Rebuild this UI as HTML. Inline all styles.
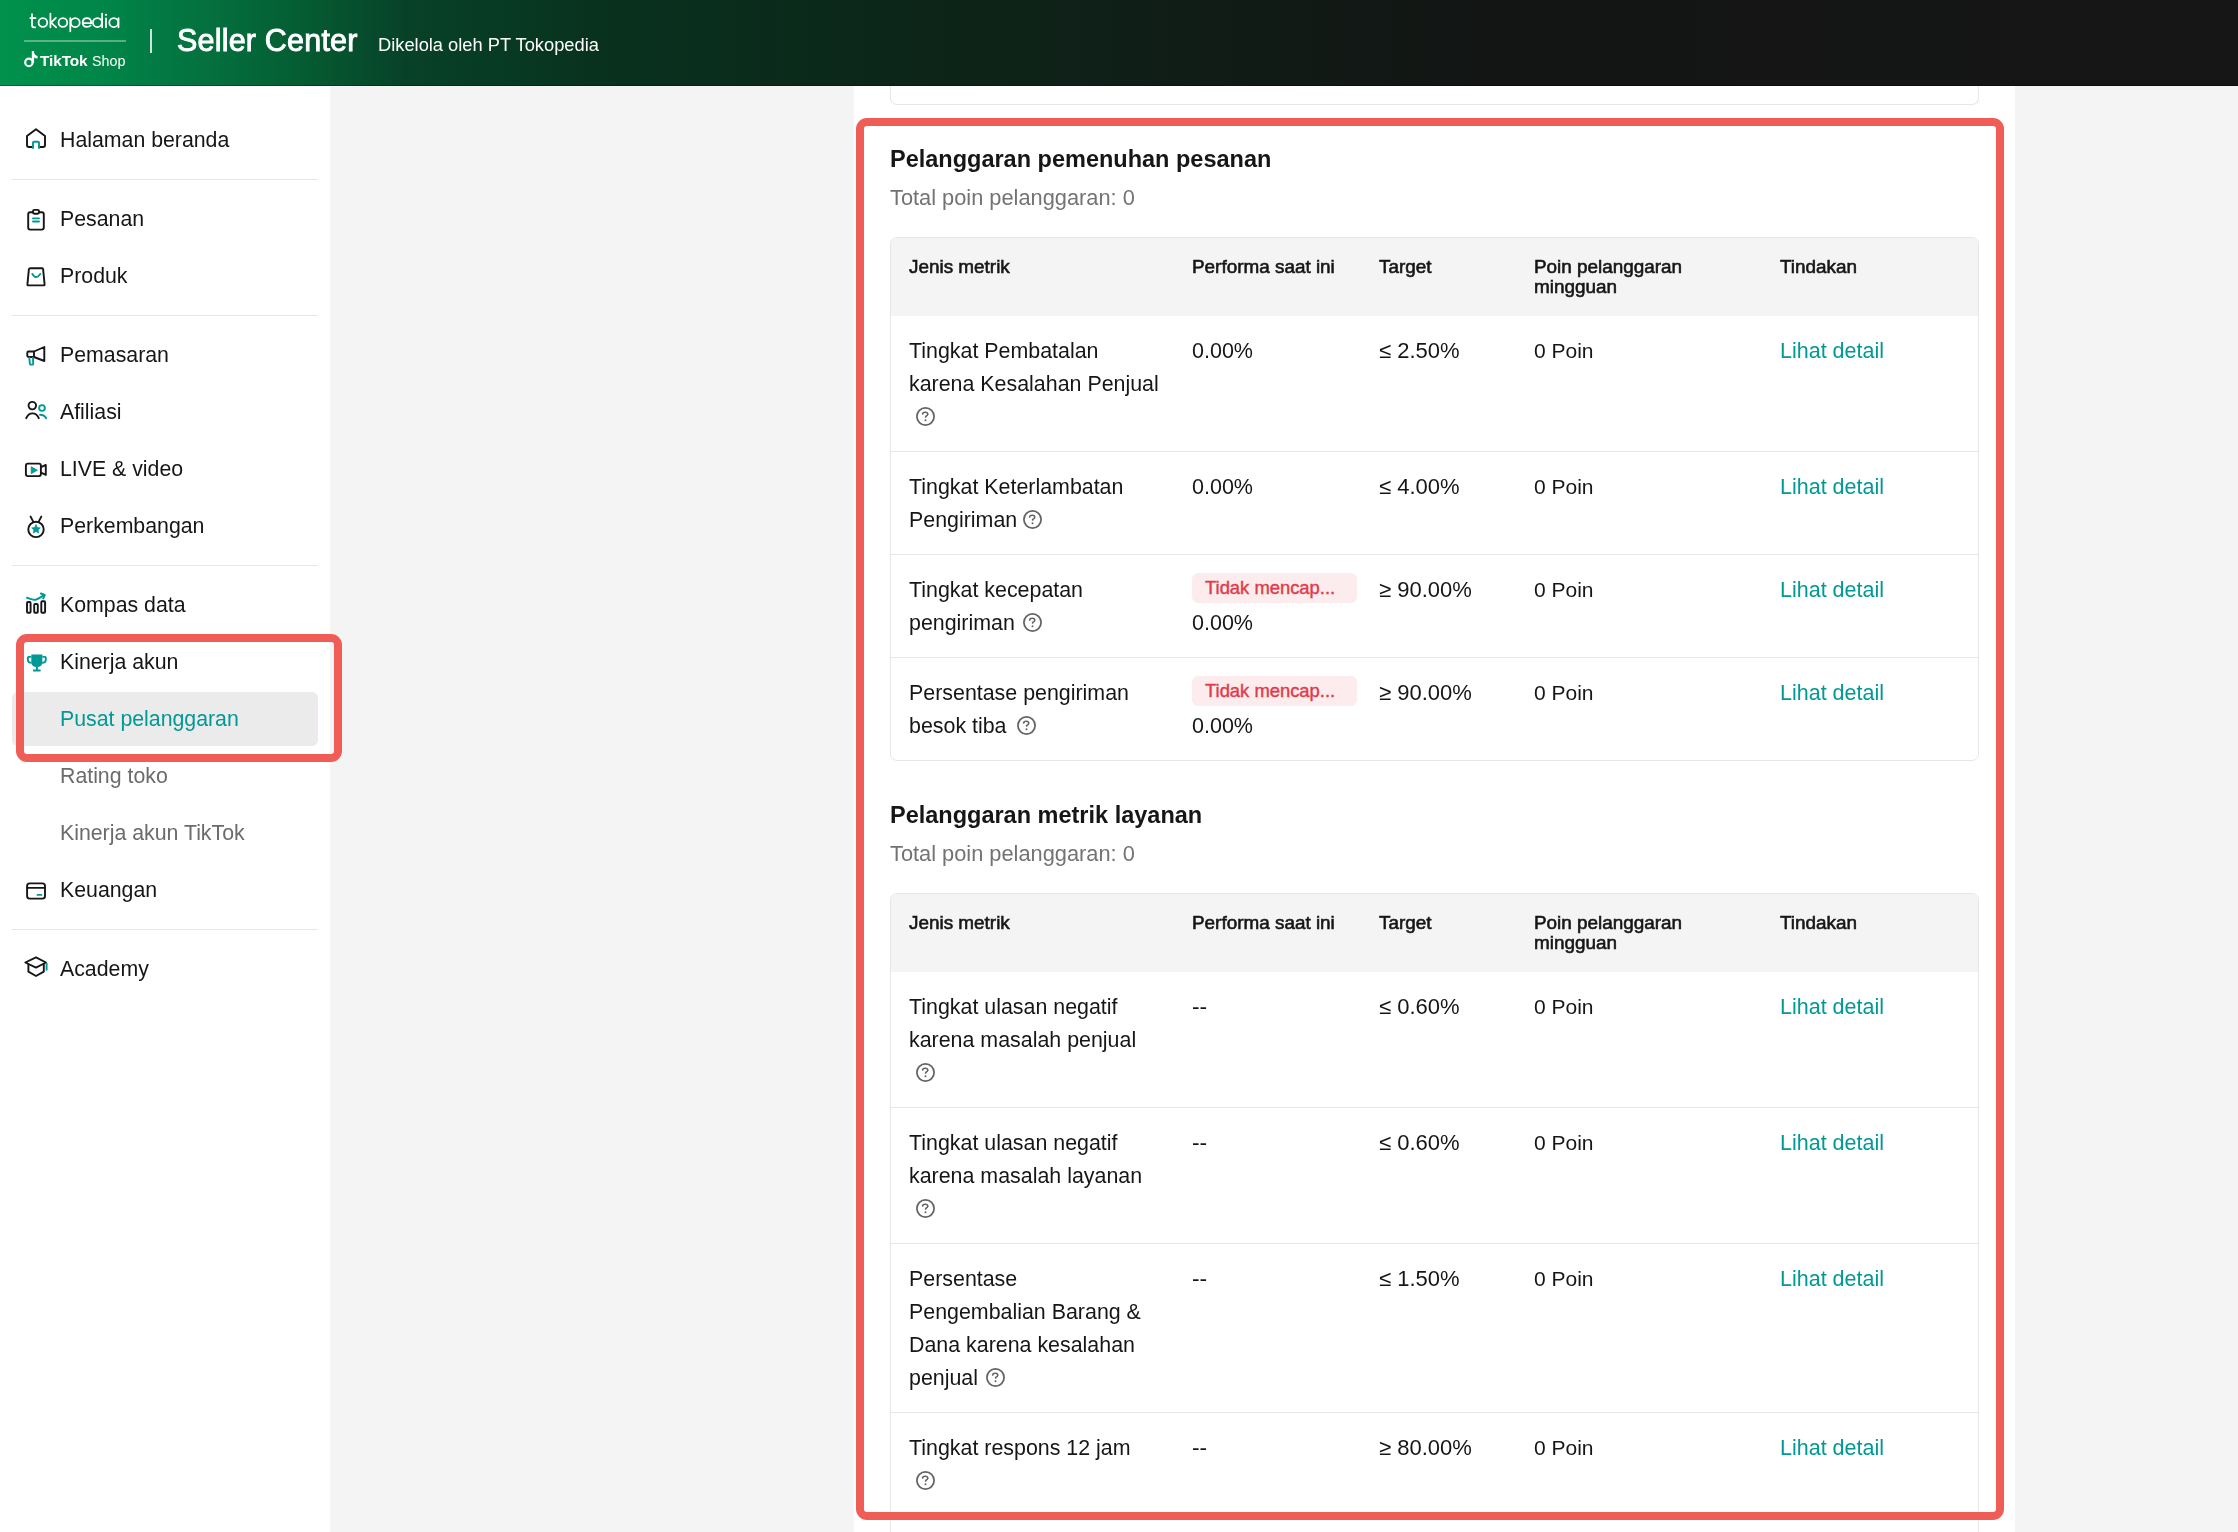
<!DOCTYPE html>
<html><head><meta charset="utf-8"><title>Seller Center</title>
<style>
*{box-sizing:border-box;margin:0;padding:0}
html,body{width:2238px;height:1532px;overflow:hidden;background:#f4f4f4;font-family:"Liberation Sans", sans-serif;}
#hdr{position:absolute;left:0;top:0;width:2238px;height:86px;background:linear-gradient(90deg,#00914d 0px,#008548 104px,#04713f 204px,#055c32 304px,#074228 404px,#08311e 604px,#0c2619 904px,#101c16 1204px,#131514 1504px,#161616 2238px);}
#hdrline{position:absolute;left:0;top:85px;width:2238px;height:1px;background:rgba(0,0,0,0.3)}
#side{position:absolute;left:0;top:86px;width:330px;height:1446px;background:#fff}
.div{position:absolute;left:12px;width:306px;height:1px;background:#e6e6e6}
#sel{position:absolute;left:12px;top:692px;width:306px;height:54px;background:#ebebeb;border-radius:6px}
#panel{position:absolute;left:854px;top:86px;width:1161px;height:1446px;background:#fff}
#topcard{position:absolute;left:890px;top:80px;width:1089px;height:25px;border:1px solid #e6e6e6;border-top:none;border-radius:0 0 7px 7px}
.tbl{position:absolute;left:890px;width:1089px;border:1px solid #e6e6e6;border-radius:7px;overflow:hidden}
.thead{position:absolute;left:0;top:0;width:100%;background:#f4f4f4}
.hl{position:absolute;left:891px;width:1087px;height:1px;background:#e6e6e6}
.t{position:absolute;white-space:nowrap;font-family:"Liberation Sans", sans-serif;will-change:transform}
.q{position:absolute}
.badge{position:absolute;left:1192px;width:165px;height:30px;border-radius:6px;background:#fdeced;color:#e13a4a;font:400 18.4px/30px "Liberation Sans", sans-serif;-webkit-text-stroke:0.4px #e13a4a;padding-left:13px;white-space:nowrap}
#sideicons{position:absolute;left:0;top:0}
.red{position:absolute;border:8px solid #f05c56;border-radius:11px}
</style></head><body>
<div id="side"></div>
<div class="div" style="top:179px"></div>
<div class="div" style="top:315px"></div>
<div class="div" style="top:565px"></div>
<div class="div" style="top:929px"></div>
<div id="sel"></div>
<div id="panel"></div>
<div id="topcard"></div>
<div id="hdr"></div><div id="hdrline"></div>
<div class="tbl" style="top:237px;height:524px"><div class="thead" style="height:78px"></div></div>
<div class="tbl" style="top:893px;height:800px"><div class="thead" style="height:78px"></div></div>
<svg id="sideicons" width="60" height="1000" viewBox="0 0 60 1000">
<g fill="none" stroke="#161616" stroke-width="1.9" stroke-linecap="round" stroke-linejoin="round">
<path d="M33 147H29Q27 147 27 145V136L36 129.3L45 136V145Q45 147 43 147H39"/>
<rect x="28.2" y="212.2" width="15.6" height="17.4" rx="2"/>
<rect x="33" y="209.9" width="6" height="3.8" rx="1.4" fill="#fff"/>
<path d="M30.6 268.3H42.2Q43 268.3 43.1 269.1L44.6 284.4Q44.7 285.4 43.7 285.4H28.3Q27.3 285.4 27.4 284.4L28.9 269.1Q29 268.3 30.6 268.3Z"/>
<path d="M34 351.5H28.5Q27.3 351.5 27.3 352.7V355.8Q27.3 357 28.5 357H34V351.5L44.3 347V361L34 357"/>
<circle cx="32.3" cy="405.6" r="3.75"/>
<path d="M26.2 418.2C27.6 415 29.8 413.4 32.5 413.4C35.2 413.4 37.4 415 38.8 418.2"/>
<rect x="25.9" y="463.6" width="15" height="12.5" rx="2"/>
<path d="M41 467.2L45.8 464.9V474.9L41 472.6"/>
<circle cx="36" cy="529.4" r="7.7"/>
<path d="M30.6 516.6L33.2 521.6M41.3 516.6L38.7 521.6"/>
<rect x="27" y="602" width="3.6" height="10.8" rx="1"/>
<rect x="34.2" y="604" width="3.6" height="8.8" rx="1"/>
<rect x="41.3" y="601.2" width="3.8" height="11.6" rx="1"/>
<rect x="27.1" y="883.4" width="17.9" height="15.2" rx="2.6"/>
<path d="M27.2 887.9H44.9"/>
<path d="M25.3 962.5L36 957.4L46 962.5L36 967.6Z"/>
<path d="M28.4 964.4V971.7L36 976L43.8 971.7V964.4"/>
</g>
<g fill="none" stroke="#009995" stroke-width="1.9" stroke-linecap="round" stroke-linejoin="round">
<path d="M33 148V142.6Q33 141.7 34 141.7H38Q39 141.7 39 142.6V148"/>
<path d="M33 218.4H39M33 221.5H39"/>
<path d="M32.4 273.9Q36.2 280.2 40.2 273.9"/>
<path d="M29.3 357.8L29.9 363.6Q30 364.6 31 364.6H32.3Q33.3 364.6 33.2 363.6L33 357.8"/>
<circle cx="42" cy="408" r="2.85"/>
<path d="M40 414.8C43 414.8 45 416 46.2 418.3"/>
<path d="M27 597.8C30 598.5 32.5 599.8 34.6 599.8C37 599.8 40.5 597 44.3 595.2M40.8 593.5L44.8 595L43.2 598.5"/>
<path d="M37.5 894.9H41.4"/>
<path d="M46.6 963.5V969.7"/>
</g>
<path d="M31.2 466.7L37.4 470.2L31.2 473.7Z" fill="#009995" stroke="#009995" stroke-width="0.8" stroke-linejoin="round"/>
<path d="M36 524.6L37.3 527.6L40.3 527.9L38 529.9L38.7 533L36 531.4L33.3 533L34 529.9L31.7 527.9L34.7 527.6Z" fill="#009995" stroke="#009995" stroke-width="0.8" stroke-linejoin="round"/>
<g fill="#009995">
<path d="M31.3 654.4H42.4V661.5Q42.4 666.9 37.9 666.9V669.6H40.6V671.6H33V669.6H35.9V666.9Q31.3 666.9 31.3 661.5Z"/>
</g>
<g fill="none" stroke="#009995" stroke-width="1.9">
<path d="M31.3 656.9H28.6Q27.9 656.9 27.9 657.7V659.5Q27.9 662.9 31.6 662.9"/>
<path d="M42.4 656.9H45.1Q45.8 656.9 45.8 657.7V659.5Q45.8 662.9 42.1 662.9"/>
</g>
</svg>
<svg style="position:absolute;left:0;top:0" width="130" height="36" viewBox="0 0 130 36"><g fill="none" stroke="#fff" stroke-width="1.75" stroke-linecap="round"><path d="M32 14.2V25.3Q32 27.3 34 27.3H35.2M30.2 18H35.6"/><circle cx="42.9" cy="22.5" r="4.35"/><path d="M50.4 13.6V27.3M55.9 17.9L51.1 22.6L56.2 27.3"/><circle cx="62.9" cy="22.5" r="4.35"/><path d="M70.3 18.2V31.3"/><circle cx="75.2" cy="22.5" r="4.5"/><path d="M82.7 23.1H91.3Q91.2 18.1 87 18.1Q82.7 18.1 82.7 22.5Q82.7 26.9 87 26.9Q89.6 26.9 90.7 25.5"/><circle cx="97.4" cy="22.5" r="4.5"/><path d="M102.1 13.6V27.3"/><path d="M106 18.4V27.3"/><circle cx="113.8" cy="22.5" r="4.5"/><path d="M118.5 18.2V27.3"/></g><circle cx="106" cy="14.8" r="1.15" fill="#fff"/></svg>
<div style="position:absolute;left:24px;top:40px;width:102px;height:2px;background:rgba(255,255,255,0.35)"></div>
<svg style="position:absolute;left:22px;top:49px" width="18" height="20" viewBox="22 49 18 20"><circle cx="28.9" cy="62.4" r="3.7" fill="none" stroke="#fff" stroke-width="2.2"/><path d="M31.8 51H34.1V62.8H31.8Z" fill="#fff"/><path d="M33.6 51Q34.2 55.6 37.6 55.9V58.6Q35.4 58.5 33.8 57.2Z" fill="#fff"/></svg>
<div class="t" style="left:40px;top:51.66px;font-size:15.4px;line-height:18px;font-weight:700;color:#fff;letter-spacing:-0.1px;">TikTok</div>
<div class="t" style="left:91.8px;top:52.54px;font-size:14.3px;line-height:17px;color:#fff;">Shop</div>
<div style="position:absolute;left:150px;top:29px;width:2px;height:24px;background:rgba(255,255,255,0.8)"></div>
<div class="t" style="left:176.5px;top:22.13px;font-size:30.5px;line-height:37px;color:#fff;-webkit-text-stroke:0.9px #fff;letter-spacing:0.2px;">Seller Center</div>
<div class="t" style="left:377.5px;top:33.86px;font-size:18.3px;line-height:22px;color:#fff;">Dikelola oleh PT Tokopedia</div>
<div class="t" style="left:59.6px;top:126.62px;font-size:21.3px;line-height:26px;color:#161616;">Halaman beranda</div>
<div class="t" style="left:59.6px;top:205.62px;font-size:21.3px;line-height:26px;color:#161616;">Pesanan</div>
<div class="t" style="left:59.6px;top:262.62px;font-size:21.3px;line-height:26px;color:#161616;">Produk</div>
<div class="t" style="left:59.6px;top:341.62px;font-size:21.3px;line-height:26px;color:#161616;">Pemasaran</div>
<div class="t" style="left:59.6px;top:398.62px;font-size:21.3px;line-height:26px;color:#161616;">Afiliasi</div>
<div class="t" style="left:59.6px;top:455.62px;font-size:21.3px;line-height:26px;color:#161616;">LIVE &amp; video</div>
<div class="t" style="left:59.6px;top:512.62px;font-size:21.3px;line-height:26px;color:#161616;">Perkembangan</div>
<div class="t" style="left:59.6px;top:591.62px;font-size:21.3px;line-height:26px;color:#161616;">Kompas data</div>
<div class="t" style="left:59.6px;top:648.62px;font-size:21.3px;line-height:26px;color:#161616;">Kinerja akun</div>
<div class="t" style="left:59.6px;top:705.62px;font-size:21.3px;line-height:26px;color:#009995;">Pusat pelanggaran</div>
<div class="t" style="left:59.6px;top:762.62px;font-size:21.3px;line-height:26px;color:#6b6b6b;">Rating toko</div>
<div class="t" style="left:59.6px;top:819.62px;font-size:21.3px;line-height:26px;color:#6b6b6b;">Kinerja akun TikTok</div>
<div class="t" style="left:59.6px;top:876.62px;font-size:21.3px;line-height:26px;color:#161616;">Keuangan</div>
<div class="t" style="left:59.6px;top:955.62px;font-size:21.3px;line-height:26px;color:#161616;">Academy</div>
<div class="t" style="left:890px;top:145.45px;font-size:23.5px;line-height:28px;font-weight:700;color:#161616;">Pelanggaran pemenuhan pesanan</div>
<div class="t" style="left:890px;top:184.54px;font-size:21.8px;line-height:26px;color:#737373;">Total poin pelanggaran: 0</div>
<div class="t" style="left:909px;top:255.65px;font-size:18.9px;line-height:21px;color:#161616;-webkit-text-stroke:0.6px #161616;">Jenis metrik</div>
<div class="t" style="left:1192px;top:255.65px;font-size:18.9px;line-height:21px;color:#161616;-webkit-text-stroke:0.6px #161616;">Performa saat ini</div>
<div class="t" style="left:1378.5px;top:255.65px;font-size:18.9px;line-height:21px;color:#161616;-webkit-text-stroke:0.6px #161616;">Target</div>
<div class="t" style="left:1534px;top:255.65px;font-size:18.9px;line-height:21px;color:#161616;-webkit-text-stroke:0.6px #161616;">Poin pelanggaran</div>
<div class="t" style="left:1534px;top:276.15px;font-size:18.9px;line-height:21px;color:#161616;-webkit-text-stroke:0.6px #161616;">mingguan</div>
<div class="t" style="left:1780px;top:255.65px;font-size:18.9px;line-height:21px;color:#161616;-webkit-text-stroke:0.6px #161616;">Tindakan</div>
<div class="t" style="left:909px;top:337.58px;font-size:21.4px;line-height:26px;color:#161616;">Tingkat Pembatalan</div>
<div class="t" style="left:909px;top:370.58px;font-size:21.4px;line-height:26px;color:#161616;">karena Kesalahan Penjual</div>
<svg class="q" style="left:916.0px;top:407.2px" width="19" height="19" viewBox="0 0 19 19"><circle cx="9.5" cy="9.5" r="8.6" fill="none" stroke="#646464" stroke-width="1.75"/><path d="M6.6 7.0C6.8 5.8 7.9 5.2 9.3 5.2C10.8 5.2 11.8 6.1 11.8 7.3C11.8 8.5 10.8 9.0 9.7 9.5L9.6 10.0" fill="none" stroke="#646464" stroke-width="1.6" stroke-linecap="round"/><circle cx="9.5" cy="13.2" r="1.0" fill="#646464"/></svg>
<div class="t" style="left:1192px;top:337.55px;font-size:21.5px;line-height:26px;color:#161616;">0.00%</div>
<div class="t" style="left:1378.5px;top:338.17px;font-size:22px;line-height:26px;color:#161616;">≤ 2.50%</div>
<div class="t" style="left:1534px;top:338.22px;font-size:21px;line-height:25px;color:#161616;">0 Poin</div>
<div class="t" style="left:1780px;top:337.55px;font-size:21.5px;line-height:26px;color:#009995;">Lihat detail</div>
<div class="hl" style="top:451.0px"></div>
<div class="t" style="left:909px;top:473.58px;font-size:21.4px;line-height:26px;color:#161616;">Tingkat Keterlambatan</div>
<div class="t" style="left:909px;top:506.58px;font-size:21.4px;line-height:26px;color:#161616;">Pengiriman</div>
<svg class="q" style="left:1023.4px;top:510.2px" width="19" height="19" viewBox="0 0 19 19"><circle cx="9.5" cy="9.5" r="8.6" fill="none" stroke="#646464" stroke-width="1.75"/><path d="M6.6 7.0C6.8 5.8 7.9 5.2 9.3 5.2C10.8 5.2 11.8 6.1 11.8 7.3C11.8 8.5 10.8 9.0 9.7 9.5L9.6 10.0" fill="none" stroke="#646464" stroke-width="1.6" stroke-linecap="round"/><circle cx="9.5" cy="13.2" r="1.0" fill="#646464"/></svg>
<div class="t" style="left:1192px;top:473.55px;font-size:21.5px;line-height:26px;color:#161616;">0.00%</div>
<div class="t" style="left:1378.5px;top:474.17px;font-size:22px;line-height:26px;color:#161616;">≤ 4.00%</div>
<div class="t" style="left:1534px;top:474.22px;font-size:21px;line-height:25px;color:#161616;">0 Poin</div>
<div class="t" style="left:1780px;top:473.55px;font-size:21.5px;line-height:26px;color:#009995;">Lihat detail</div>
<div class="hl" style="top:554.0px"></div>
<div class="t" style="left:909px;top:576.58px;font-size:21.4px;line-height:26px;color:#161616;">Tingkat kecepatan</div>
<div class="t" style="left:909px;top:609.58px;font-size:21.4px;line-height:26px;color:#161616;">pengiriman</div>
<svg class="q" style="left:1023.4px;top:613.2px" width="19" height="19" viewBox="0 0 19 19"><circle cx="9.5" cy="9.5" r="8.6" fill="none" stroke="#646464" stroke-width="1.75"/><path d="M6.6 7.0C6.8 5.8 7.9 5.2 9.3 5.2C10.8 5.2 11.8 6.1 11.8 7.3C11.8 8.5 10.8 9.0 9.7 9.5L9.6 10.0" fill="none" stroke="#646464" stroke-width="1.6" stroke-linecap="round"/><circle cx="9.5" cy="13.2" r="1.0" fill="#646464"/></svg>
<div class="badge" style="top:573.0px">Tidak mencap...</div>
<div class="t" style="left:1192px;top:609.55px;font-size:21.5px;line-height:26px;color:#161616;">0.00%</div>
<div class="t" style="left:1378.5px;top:577.17px;font-size:22px;line-height:26px;color:#161616;">≥ 90.00%</div>
<div class="t" style="left:1534px;top:577.22px;font-size:21px;line-height:25px;color:#161616;">0 Poin</div>
<div class="t" style="left:1780px;top:576.55px;font-size:21.5px;line-height:26px;color:#009995;">Lihat detail</div>
<div class="hl" style="top:657.0px"></div>
<div class="t" style="left:909px;top:679.58px;font-size:21.4px;line-height:26px;color:#161616;">Persentase pengiriman</div>
<div class="t" style="left:909px;top:712.58px;font-size:21.4px;line-height:26px;color:#161616;">besok tiba</div>
<svg class="q" style="left:1017.2px;top:716.2px" width="19" height="19" viewBox="0 0 19 19"><circle cx="9.5" cy="9.5" r="8.6" fill="none" stroke="#646464" stroke-width="1.75"/><path d="M6.6 7.0C6.8 5.8 7.9 5.2 9.3 5.2C10.8 5.2 11.8 6.1 11.8 7.3C11.8 8.5 10.8 9.0 9.7 9.5L9.6 10.0" fill="none" stroke="#646464" stroke-width="1.6" stroke-linecap="round"/><circle cx="9.5" cy="13.2" r="1.0" fill="#646464"/></svg>
<div class="badge" style="top:676.0px">Tidak mencap...</div>
<div class="t" style="left:1192px;top:712.55px;font-size:21.5px;line-height:26px;color:#161616;">0.00%</div>
<div class="t" style="left:1378.5px;top:680.17px;font-size:22px;line-height:26px;color:#161616;">≥ 90.00%</div>
<div class="t" style="left:1534px;top:680.22px;font-size:21px;line-height:25px;color:#161616;">0 Poin</div>
<div class="t" style="left:1780px;top:679.55px;font-size:21.5px;line-height:26px;color:#009995;">Lihat detail</div>
<div class="t" style="left:890px;top:801.35px;font-size:23.5px;line-height:28px;font-weight:700;color:#161616;">Pelanggaran metrik layanan</div>
<div class="t" style="left:890px;top:841.04px;font-size:21.8px;line-height:26px;color:#737373;">Total poin pelanggaran: 0</div>
<div class="t" style="left:909px;top:911.65px;font-size:18.9px;line-height:21px;color:#161616;-webkit-text-stroke:0.6px #161616;">Jenis metrik</div>
<div class="t" style="left:1192px;top:911.65px;font-size:18.9px;line-height:21px;color:#161616;-webkit-text-stroke:0.6px #161616;">Performa saat ini</div>
<div class="t" style="left:1378.5px;top:911.65px;font-size:18.9px;line-height:21px;color:#161616;-webkit-text-stroke:0.6px #161616;">Target</div>
<div class="t" style="left:1534px;top:911.65px;font-size:18.9px;line-height:21px;color:#161616;-webkit-text-stroke:0.6px #161616;">Poin pelanggaran</div>
<div class="t" style="left:1534px;top:932.15px;font-size:18.9px;line-height:21px;color:#161616;-webkit-text-stroke:0.6px #161616;">mingguan</div>
<div class="t" style="left:1780px;top:911.65px;font-size:18.9px;line-height:21px;color:#161616;-webkit-text-stroke:0.6px #161616;">Tindakan</div>
<div class="t" style="left:909px;top:993.58px;font-size:21.4px;line-height:26px;color:#161616;">Tingkat ulasan negatif</div>
<div class="t" style="left:909px;top:1026.58px;font-size:21.4px;line-height:26px;color:#161616;">karena masalah penjual</div>
<svg class="q" style="left:916.0px;top:1063.2px" width="19" height="19" viewBox="0 0 19 19"><circle cx="9.5" cy="9.5" r="8.6" fill="none" stroke="#646464" stroke-width="1.75"/><path d="M6.6 7.0C6.8 5.8 7.9 5.2 9.3 5.2C10.8 5.2 11.8 6.1 11.8 7.3C11.8 8.5 10.8 9.0 9.7 9.5L9.6 10.0" fill="none" stroke="#646464" stroke-width="1.6" stroke-linecap="round"/><circle cx="9.5" cy="13.2" r="1.0" fill="#646464"/></svg>
<div class="t" style="left:1192px;top:992.60px;font-size:22.8px;line-height:27px;color:#161616;">--</div>
<div class="t" style="left:1378.5px;top:994.17px;font-size:22px;line-height:26px;color:#161616;">≤ 0.60%</div>
<div class="t" style="left:1534px;top:994.22px;font-size:21px;line-height:25px;color:#161616;">0 Poin</div>
<div class="t" style="left:1780px;top:993.55px;font-size:21.5px;line-height:26px;color:#009995;">Lihat detail</div>
<div class="hl" style="top:1107.0px"></div>
<div class="t" style="left:909px;top:1129.58px;font-size:21.4px;line-height:26px;color:#161616;">Tingkat ulasan negatif</div>
<div class="t" style="left:909px;top:1162.58px;font-size:21.4px;line-height:26px;color:#161616;">karena masalah layanan</div>
<svg class="q" style="left:916.0px;top:1199.2px" width="19" height="19" viewBox="0 0 19 19"><circle cx="9.5" cy="9.5" r="8.6" fill="none" stroke="#646464" stroke-width="1.75"/><path d="M6.6 7.0C6.8 5.8 7.9 5.2 9.3 5.2C10.8 5.2 11.8 6.1 11.8 7.3C11.8 8.5 10.8 9.0 9.7 9.5L9.6 10.0" fill="none" stroke="#646464" stroke-width="1.6" stroke-linecap="round"/><circle cx="9.5" cy="13.2" r="1.0" fill="#646464"/></svg>
<div class="t" style="left:1192px;top:1128.60px;font-size:22.8px;line-height:27px;color:#161616;">--</div>
<div class="t" style="left:1378.5px;top:1130.17px;font-size:22px;line-height:26px;color:#161616;">≤ 0.60%</div>
<div class="t" style="left:1534px;top:1130.22px;font-size:21px;line-height:25px;color:#161616;">0 Poin</div>
<div class="t" style="left:1780px;top:1129.55px;font-size:21.5px;line-height:26px;color:#009995;">Lihat detail</div>
<div class="hl" style="top:1243.0px"></div>
<div class="t" style="left:909px;top:1265.58px;font-size:21.4px;line-height:26px;color:#161616;">Persentase</div>
<div class="t" style="left:909px;top:1298.58px;font-size:21.4px;line-height:26px;color:#161616;">Pengembalian Barang &amp;</div>
<div class="t" style="left:909px;top:1331.58px;font-size:21.4px;line-height:26px;color:#161616;">Dana karena kesalahan</div>
<div class="t" style="left:909px;top:1364.58px;font-size:21.4px;line-height:26px;color:#161616;">penjual</div>
<svg class="q" style="left:985.9px;top:1368.2px" width="19" height="19" viewBox="0 0 19 19"><circle cx="9.5" cy="9.5" r="8.6" fill="none" stroke="#646464" stroke-width="1.75"/><path d="M6.6 7.0C6.8 5.8 7.9 5.2 9.3 5.2C10.8 5.2 11.8 6.1 11.8 7.3C11.8 8.5 10.8 9.0 9.7 9.5L9.6 10.0" fill="none" stroke="#646464" stroke-width="1.6" stroke-linecap="round"/><circle cx="9.5" cy="13.2" r="1.0" fill="#646464"/></svg>
<div class="t" style="left:1192px;top:1264.60px;font-size:22.8px;line-height:27px;color:#161616;">--</div>
<div class="t" style="left:1378.5px;top:1266.17px;font-size:22px;line-height:26px;color:#161616;">≤ 1.50%</div>
<div class="t" style="left:1534px;top:1266.22px;font-size:21px;line-height:25px;color:#161616;">0 Poin</div>
<div class="t" style="left:1780px;top:1265.55px;font-size:21.5px;line-height:26px;color:#009995;">Lihat detail</div>
<div class="hl" style="top:1412.0px"></div>
<div class="t" style="left:909px;top:1434.58px;font-size:21.4px;line-height:26px;color:#161616;">Tingkat respons 12 jam</div>
<svg class="q" style="left:916.0px;top:1471.2px" width="19" height="19" viewBox="0 0 19 19"><circle cx="9.5" cy="9.5" r="8.6" fill="none" stroke="#646464" stroke-width="1.75"/><path d="M6.6 7.0C6.8 5.8 7.9 5.2 9.3 5.2C10.8 5.2 11.8 6.1 11.8 7.3C11.8 8.5 10.8 9.0 9.7 9.5L9.6 10.0" fill="none" stroke="#646464" stroke-width="1.6" stroke-linecap="round"/><circle cx="9.5" cy="13.2" r="1.0" fill="#646464"/></svg>
<div class="t" style="left:1192px;top:1433.60px;font-size:22.8px;line-height:27px;color:#161616;">--</div>
<div class="t" style="left:1378.5px;top:1435.17px;font-size:22px;line-height:26px;color:#161616;">≥ 80.00%</div>
<div class="t" style="left:1534px;top:1435.22px;font-size:21px;line-height:25px;color:#161616;">0 Poin</div>
<div class="t" style="left:1780px;top:1434.55px;font-size:21.5px;line-height:26px;color:#009995;">Lihat detail</div>
<div class="red" style="left:856px;top:118px;width:1148px;height:1402px"></div>
<div class="red" style="left:16px;top:634px;width:326px;height:128px"></div>
</body></html>
